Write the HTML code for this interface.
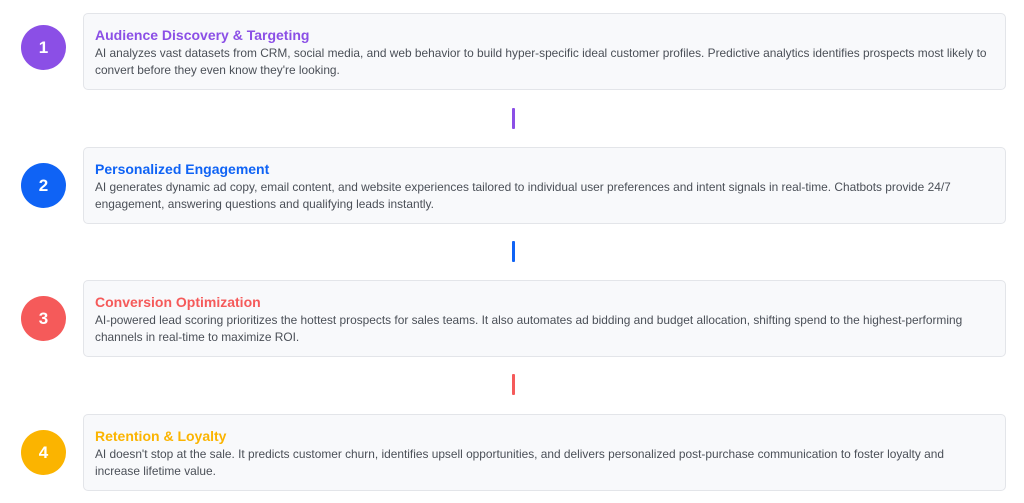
<!DOCTYPE html>
<html><head><style>
body{margin:0;width:1024px;height:503px;background:#fff;font-family:"Liberation Sans",sans-serif;position:relative;overflow:hidden}
.c{position:absolute;left:21px;width:45px;height:45px;border-radius:50%;color:#fff;font-weight:bold;font-size:17px;display:flex;align-items:center;justify-content:center}
.card{position:absolute;left:83px;width:923px;height:77px;background:#f8f9fb;border:1px solid #e3e5e9;border-radius:5px;box-sizing:border-box;padding:12px 8px 0 11px}
.t{font-weight:bold;font-size:14px;line-height:18px;margin-bottom:1px}
.d{font-size:11.9px;line-height:17px;color:#4a4f57;white-space:nowrap}
.l{position:absolute;left:512px;width:3px;height:21px;border-radius:1px}
</style></head><body>
<div class="c" style="top:25px;background:#8b4fe6">1</div>
<div class="card" style="top:13px"><div class="t" style="color:#8b4fe6">Audience Discovery &amp; Targeting</div><div class="d">AI analyzes vast datasets from CRM, social media, and web behavior to build hyper-specific ideal customer profiles. Predictive analytics identifies prospects most likely to<br>convert before they even know they're looking.</div></div>
<div class="l" style="top:108px;background:#8b4fe6"></div>
<div class="c" style="top:163px;background:#0f63f5">2</div>
<div class="card" style="top:147px"><div class="t" style="color:#0f63f5">Personalized Engagement</div><div class="d">AI generates dynamic ad copy, email content, and website experiences tailored to individual user preferences and intent signals in real-time. Chatbots provide 24/7<br>engagement, answering questions and qualifying leads instantly.</div></div>
<div class="l" style="top:241px;background:#0f63f5"></div>
<div class="c" style="top:296px;background:#f55a5a">3</div>
<div class="card" style="top:280px"><div class="t" style="color:#f55a5a">Conversion Optimization</div><div class="d">AI-powered lead scoring prioritizes the hottest prospects for sales teams. It also automates ad bidding and budget allocation, shifting spend to the highest-performing<br>channels in real-time to maximize ROI.</div></div>
<div class="l" style="top:374px;background:#f55a5a"></div>
<div class="c" style="top:430px;background:#fbb400">4</div>
<div class="card" style="top:414px"><div class="t" style="color:#fbb400">Retention &amp; Loyalty</div><div class="d">AI doesn't stop at the sale. It predicts customer churn, identifies upsell opportunities, and delivers personalized post-purchase communication to foster loyalty and<br>increase lifetime value.</div></div>
</body></html>
